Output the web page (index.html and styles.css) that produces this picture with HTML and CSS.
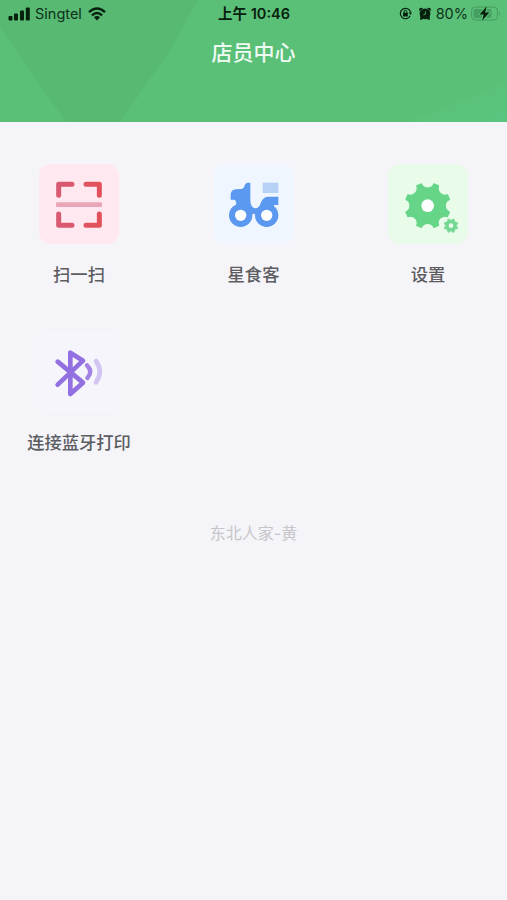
FILE: index.html
```html
<!DOCTYPE html>
<html lang="zh-CN">
<head>
    <meta charset="UTF-8">
    <meta name="viewport" content="width=device-width, initial-scale=1.0">
    <title>店员中心</title>
    <link rel="stylesheet" href="styles.css">
</head>
<body>
    <header class="header">
        <svg class="header-bg" viewBox="0 0 507 122" preserveAspectRatio="none">
            <defs>
                <linearGradient id="corner" x1="0.3" y1="0.3" x2="1" y2="1">
                    <stop offset="0" stop-color="#5bc077"/>
                    <stop offset="1" stop-color="#59c57f"/>
                </linearGradient>
            </defs>
            <path d="M0 28V0H198L170 50L120 122H66Z" fill="#57b972"/>
            <path d="M408 122L507 82V122Z" fill="url(#corner)"/>
        </svg>
        <div class="status-bar">
            <div class="status-left">
                <svg width="22" height="14" viewBox="0 0 22 14">
                    <rect x="0.5" y="9" width="4" height="4.5" rx="1"/>
                    <rect x="6" y="6.5" width="4" height="7" rx="1"/>
                    <rect x="12" y="3.5" width="4" height="10" rx="1"/>
                    <rect x="17.8" y="0.5" width="4" height="13" rx="1"/>
                </svg>
                <span class="carrier">Singtel</span>
                <svg width="18" height="14" viewBox="0 0 18 14">
                    <g fill="none" stroke="#06200e" stroke-width="2.4">
                        <path d="M1 5.2Q9-2 17 5.2"/>
                        <path d="M3.9 8.3Q9 3.7 14.1 8.3"/>
                    </g>
                    <path d="M5.9 10.2Q9 7.6 12.1 10.2L9 13.5Z"/>
                </svg>
            </div>
            <div class="time">上午 10:46</div>
            <div class="status-right">
                <svg width="13" height="13" viewBox="0 0 13 13">
                    <path d="M11.2 8.8A5.2 5.2 0 1 1 11.6 5.4" fill="none" stroke="#06200e" stroke-width="1.2"/>
                    <path d="M9.7 5.6H13L11.4 8Z"/>
                    <rect x="4" y="5.8" width="4.8" height="3.7" rx="0.5"/>
                    <path d="M5 6V4.8a1.4 1.4 0 0 1 2.8 0V6" fill="none" stroke="#06200e"/>
                </svg>
                <svg class="alarm" width="12" height="13" viewBox="0 0 12 13">
                    <circle cx="6" cy="6.8" r="5.4"/>
                    <path d="M0.3 4.6V1.4Q2 0 4 1.2ZM11.7 4.6V1.4Q10 0 8 1.2ZM1.2 13V9L4.5 12ZM10.8 13V9L7.5 12Z"/>
                    <path d="M6.4 4.4V7.2L4.4 7.8" fill="none" stroke="#5bc077" stroke-width="0.8"/>
                </svg>
                <span class="percent">80%</span>
                <svg width="30" height="15" viewBox="0 0 30 15">
                    <rect x="0.6" y="1" width="25.8" height="13" rx="3.6" fill="none" stroke="#459a5f"/>
                    <path d="M4.5 3H12L7 9H11V12H4.5Q2.5 12 2.5 10V5Q2.5 3 4.5 3ZM16 3H18.5Q20.5 3 20.5 5V10Q20.5 12 18.5 12H15L20 6H16Z" fill="#469f61"/>
                    <path d="M28 5.3Q30 7.5 28 9.7Z" fill="#459a5f"/>
                    <path d="M15.6 0.5L8.5 8.5H12.6L11.2 14.5L18.4 6.5H14.2Z"/>
                </svg>
            </div>
        </div>
        <h1>店员中心</h1>
    </header>

    <main>
        <div class="menu">
            <div class="menu-item">
                <div class="icon icon-scan">
                    <svg viewBox="57 42 240 240">
                        <defs>
                            <linearGradient id="scan-red" gradientUnits="userSpaceOnUse" x1="108" y1="0" x2="246" y2="0">
                                <stop offset="0" stop-color="#d75b74"/>
                                <stop offset="1" stop-color="#e25058"/>
                            </linearGradient>
                        </defs>
                        <path d="M116 136V103H156M198 103H238V136M116 192V226H156M198 226H238V192" fill="none" stroke="url(#scan-red)" stroke-width="15" stroke-linecap="round" stroke-linejoin="round"/>
                        <rect x="108" y="157" width="138" height="14" rx="3" fill="#eaa5b7"/>
                    </svg>
                </div>
                <p>扫一扫</p>
            </div>
            <div class="menu-item">
                <div class="icon icon-rider">
                    <svg viewBox="58 42 240 240">
                        <rect x="204" y="98" width="47" height="31" fill="#b5d2f6"/>
                        <g fill="#5a99ef">
                            <path d="M108 149V134Q109 119 124 118L141 117Q148 116 150 106Q152 98 159 98H167V148C167 162 171 175 183 175C193 175 196 166 199 157Q205 140 222 140H251V165H238V196H186Q177 186 168 196H125V164Q125 149 117 149Z"/>
                            <circle cx="138" cy="196" r="35"/>
                            <circle cx="216" cy="196" r="35"/>
                        </g>
                        <circle cx="138" cy="196" r="17" fill="#fff"/>
                        <circle cx="216" cy="196" r="17" fill="#fff"/>
                    </svg>
                </div>
                <p>星食客</p>
            </div>
            <div class="menu-item">
                <div class="icon icon-settings">
                    <svg viewBox="54 42 240 240">
                        <defs>
                            <path id="gear" d="M-6.5-22.7C-4-17 4-17 6.5-22.7L11.4-20.6C9.2-14.8 14.8-9.2 20.6-11.4L22.7-6.5C17-4 17 4 22.7 6.5L20.6 11.4C14.8 9.2 9.2 14.8 11.4 20.6L6.5 22.7C4 17-4 17-6.5 22.7L-11.4 20.6C-9.2 14.8-14.8 9.2-20.6 11.4L-22.7 6.5C-17 4-17-4-22.7-6.5L-20.6-11.4C-14.8-9.2-9.2-14.8-11.4-20.6Z" stroke-width="1.2" stroke-linejoin="round"/>
                        </defs>
                        <use href="#gear" transform="translate(173 167) scale(2.88)" fill="#66d588" stroke="#66d588"/>
                        <circle cx="173" cy="167" r="19" fill="#fff"/>
                        <use href="#gear" transform="translate(243 227) scale(0.92)" fill="#73d992" stroke="#73d992"/>
                        <circle cx="243" cy="227" r="7" fill="#e9fbe9"/>
                    </svg>
                </div>
                <p>设置</p>
            </div>
            <div class="menu-item">
                <div class="icon icon-bluetooth">
                    <svg viewBox="72 36 240 240">
                        <g fill="none" stroke-linecap="round" stroke-linejoin="round">
                            <path d="M128 125L204 188L166 222V98L204 122L128 194" stroke="#9370e2" stroke-width="14"/>
                            <path d="M216 136Q235 154 217 174" stroke="#a283e5" stroke-width="13"/>
                            <path d="M243 123Q266 154 243 187" stroke="#d3c5f1" stroke-width="14"/>
                        </g>
                    </svg>
                </div>
                <p>连接蓝牙打印</p>
            </div>
        </div>
        <p class="shop-name">东北人家-黄</p>
    </main>
</body>
</html>
```
FILE: styles.css
```css
* {
    box-sizing: border-box;
}

body {
    font-family: 'Inter', 'Noto Sans CJK SC', sans-serif;
    background-color: #f4f4f9;
    color: #5c5c61;
    margin: 0;
    min-height: 900px;
}

h1, p {
    margin: 0;
}

.header {
    position: relative;
    height: 122px;
    background-color: #5bc077;
    overflow: hidden;
}

.header-bg {
    position: absolute;
    top: 0;
    left: 0;
    width: 100%;
    height: 100%;
    z-index: 0;
}

.status-bar {
    position: relative;
    display: grid;
    grid-template-columns: 1fr auto 1fr;
    align-items: center;
    height: 27px;
    padding: 0 6px 0 8px;
    font-size: 14.5px;
    color: #0d321a;
    fill: #06200e;
}

.status-left,
.status-right {
    display: flex;
    align-items: center;
}

.status-right {
    justify-content: flex-end;
}

.carrier {
    margin: 0 6px 0 5px;
}

.time {
    font-weight: 600;
    line-height: 20px;
    margin-right: 1px;
    color: #06200e;
}

.alarm {
    margin: 0 5px 0 7px;
}

.percent {
    margin-right: 3px;
}

.header h1 {
    position: relative;
    font-size: 21px;
    line-height: 30px;
    font-weight: 500;
    text-align: center;
    color: #effaf2;
    margin-top: 11px;
}

.menu {
    display: grid;
    grid-template-columns: repeat(3, 126px);
    justify-content: space-between;
    row-gap: 44px;
    padding: 42px 16px 0;
}

.menu-item {
    display: flex;
    flex-direction: column;
    align-items: center;
    height: 124px;
}

.menu-item p {
    font-size: 17.3px;
    line-height: 26px;
    font-weight: 500;
    margin-top: 18px;
    white-space: nowrap;
}

.icon {
    width: 80px;
    height: 80px;
    border-radius: 12px;
}

.icon svg {
    display: block;
    width: 80px;
    height: 80px;
}

.icon-scan {
    background-color: #ffe8f0;
}

.icon-rider {
    background-color: #eff6ff;
}

.icon-settings {
    background-color: #e9fbe9;
}

.icon-bluetooth {
    background-color: #f6f5fc;
}

.shop-name {
    margin-top: 65px;
    font-size: 16px;
    line-height: 24px;
    text-align: center;
    color: #c6c6ca;
}
```
